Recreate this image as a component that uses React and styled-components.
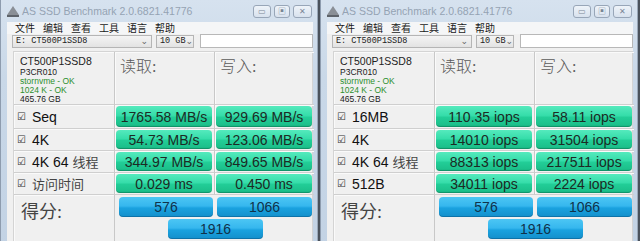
import React from 'react';
import styled, { createGlobalStyle } from 'styled-components';

const Global = createGlobalStyle`
  html, body { margin: 0; padding: 0; background: #4a525c; overflow: hidden; }
  body { width: 640px; height: 241px; font-family: "Liberation Sans", "Noto Sans CJK SC", sans-serif; }
`;

const Screen = styled.div`
  display: flex;
  width: 640px;
  height: 241px;
  overflow: hidden;
`;

const Window = styled.div`
  width: 318px;
  margin-right: 2px;
  height: 260px;
  background: linear-gradient(180deg, #d6e2ef 0%, #c9d8e8 30%, #c2d2e4 100%);
  border-left: 1px solid #8e9cae;
  border-right: 1px solid #9aa8b9;
  box-sizing: border-box;
  padding: 0 4px 0 6px;
  display: flex;
  flex-direction: column;
`;

const TitleBar = styled.div`
  height: 22px;
  display: flex;
  align-items: center;
`;

const AppIcon = styled.svg`
  width: 12px;
  height: 11px;
  margin-right: 3px;
  margin-top: 1px;
`;

const Title = styled.div`
  font-size: 10.5px;
  color: #95a3b3;
  flex: 1;
  white-space: nowrap;
`;

const Caption = styled.div`
  display: flex;
  gap: 3px;
  margin-right: 1px;
  margin-top: 1px;
`;

const CapBtn = styled.div`
  width: ${p => p.w}px;
  height: 13px;
  border: 1px solid #98a6b8;
  border-radius: 3px;
  background: linear-gradient(180deg, #eef3f9 0%, #d8e2ee 100%);
  display: flex;
  align-items: center;
  justify-content: center;
  box-sizing: border-box;
  color: #7a8696;
  font-size: 8px;
  line-height: 8px;
`;

const Client = styled.div`
  flex: 1;
  background: #f0f0f0;
  display: flex;
  flex-direction: column;
`;

const MenuBar = styled.div`
  height: 12px;
  display: flex;
  background: #f5f6f7;
  padding-left: 8px;
  gap: 8px;
  font-size: 10px;
  line-height: 11px;
  color: #1a1a1a;
  font-family: "Noto Sans CJK SC", sans-serif;
`;

const ComboRow = styled.div`
  display: flex;
  align-items: center;
  height: 14px;
  padding-left: 5px;
  gap: 4px;
`;

const Combo = styled.div`
  width: ${p => p.w}px;
  height: 13px;
  border: 1px solid #b5b5b5;
  background: linear-gradient(180deg, #f4f4f4, #e3e3e3);
  box-sizing: border-box;
  display: flex;
  align-items: center;
  font-family: "Liberation Mono", monospace;
  font-size: 8.5px;
  white-space: nowrap;
  color: #222;
  padding-left: 3px;
`;

const Arrow = styled.span`
  margin-left: auto;
  margin-right: 3px;
  font-family: "DejaVu Sans", sans-serif;
  font-size: 9px;
  line-height: 9px;
  color: #666;
`;

const TextBox = styled.div`
  flex: 1;
  height: 14px;
  border: 1px solid #b8b8b8;
  background: #fff;
  box-sizing: border-box;
  margin-left: 2px;
`;

const Panel = styled.div`
  margin: 3px 0 0 6px;
  display: grid;
  grid-template-columns: 101px 100px 99px;
  grid-template-rows: 53px 24px 22px 22px 22px 46px;
  border: 1px solid #d4d4d4;
  background: #f0f0f0;
`;

const Cell = styled.div`
  border-right: ${p => (p.last ? 'none' : '1px solid #c8c8c8')};
  border-bottom: 1px solid #cfcfcf;
  box-shadow: inset 1px 1px 0 #fafafa;
  box-sizing: border-box;
  display: flex;
  align-items: center;
  padding: 0 2px;
`;

const InfoCell = styled(Cell)`
  flex-direction: column;
  align-items: flex-start;
  justify-content: flex-start;
  padding: 3px 0 0 6px;
  font-size: 9px;
  line-height: 9px;
  color: #1a1a1a;
`;

const Model = styled.div`
  font-size: 10.5px;
  line-height: 12px;
  margin-bottom: 1px;
  color: #222;
`;

const InfoLine = styled.div`
  color: ${p => (p.ok ? '#2d8f2d' : '#1a1a1a')};
  font-size: 8.5px;
`;

const HeadCell = styled(Cell)`
  align-items: flex-start;
  padding: 1px 0 0 5px;
  font-family: "Liberation Serif", "Noto Sans CJK SC", serif;
  font-size: 16px;
  color: #5a5a5a;
  font-weight: 300;
`;

const LabelCell = styled(Cell)`
  font-size: 14px;
  color: #111;
  padding-left: 3px;
  gap: 4px;
`;

const Check = styled.span`
  font-family: "DejaVu Sans", sans-serif;
  font-size: 10px;
  color: #333;
  width: 11px;
`;

const Cjk = styled.span`
  font-family: "Noto Sans CJK SC", sans-serif;
  font-size: 13px;
  color: #444;
`;

const ResultCell = styled(Cell)`
  padding: 1px 2px 1px 1px;
  align-items: stretch;
`;

const Result = styled.div`
  flex: 1;
  border-radius: 4px;
  background: linear-gradient(180deg, #55eabd 0%, #36ddaa 45%, #22cd97 55%, #1cc08b 90%, #14a676 100%);
  box-shadow: inset 0 -1px 0 rgba(0, 80, 50, 0.25);
  display: flex;
  align-items: center;
  justify-content: center;
  font-size: 14px;
  color: #1c2a24;
`;

const ScoreLabel = styled.div`
  grid-column: 1;
  grid-row: 6;
  border-right: 1px solid #c8c8c8;
  padding: 2px 0 0 7px;
  font-family: "Liberation Serif", "Noto Sans CJK SC", serif;
  font-size: 18px;
  color: #444;
  box-shadow: inset 1px 1px 0 #fafafa;
`;

const ScoreArea = styled.div`
  grid-column: 2 / 4;
  grid-row: 6;
  display: grid;
  grid-template-columns: 94px 95px;
  column-gap: 4px;
  row-gap: 2px;
  padding: 2px 0 0 4px;
  grid-auto-rows: 20px;
`;

const Score = styled.div`
  grid-column: ${p => p.span || 'auto'};
  justify-self: ${p => (p.center ? 'center' : 'stretch')};
  width: ${p => (p.center ? '95px' : 'auto')};
  border-radius: 4px;
  background: linear-gradient(180deg, #4cc6f4 0%, #36b7ee 45%, #1aa2df 55%, #138fcb 100%);
  box-shadow: inset 0 -1px 0 rgba(0, 50, 90, 0.3);
  display: flex;
  align-items: center;
  justify-content: center;
  font-size: 14px;
  color: #10324a;
`;

const AppLogo = () => (
  <AppIcon viewBox="0 0 12 11">
    <path d="M6 0 L12 9 L0 9 Z" fill="#8a8f96" />
    <rect x="0" y="9" width="12" height="2" fill="#5e636a" />
  </AppIcon>
);

const rowsMB = [
  { label: 'Seq', r: '1765.58 MB/s', w: '929.69 MB/s' },
  { label: '4K', r: '54.73 MB/s', w: '123.06 MB/s' },
  { label: '4K 64', cjk: '线程', r: '344.97 MB/s', w: '849.65 MB/s' },
  { cjk: '访问时间', r: '0.029 ms', w: '0.450 ms' },
];

const rowsIops = [
  { label: '16MB', r: '110.35 iops', w: '58.11 iops' },
  { label: '4K', r: '14010 iops', w: '31504 iops' },
  { label: '4K 64', cjk: '线程', r: '88313 iops', w: '217511 iops' },
  { label: '512B', r: '34011 iops', w: '2224 iops' },
];

const Bench = ({ rows, drive }) => (
  <Window>
    <TitleBar>
      <AppLogo />
      <Title>AS SSD Benchmark 2.0.6821.41776</Title>
      <Caption>
        <CapBtn w={18}>▭</CapBtn>
        <CapBtn w={16}>▣</CapBtn>
        <CapBtn w={19}>✕</CapBtn>
      </Caption>
    </TitleBar>
    <Client>
      <MenuBar>
        <span>文件</span>
        <span>编辑</span>
        <span>查看</span>
        <span>工具</span>
        <span>语言</span>
        <span>帮助</span>
      </MenuBar>
      <ComboRow>
        <Combo w={140}>{drive}: CT500P1SSD8<Arrow>⌄</Arrow></Combo>
        <Combo w={38}>10 GB<Arrow>⌄</Arrow></Combo>
        <TextBox />
      </ComboRow>
      <Panel>
        <InfoCell>
          <Model>CT500P1SSD8</Model>
          <InfoLine>P3CR010</InfoLine>
          <InfoLine ok>stornvme - OK</InfoLine>
          <InfoLine ok>1024 K - OK</InfoLine>
          <InfoLine>465.76 GB</InfoLine>
        </InfoCell>
        <HeadCell>读取:</HeadCell>
        <HeadCell last>写入:</HeadCell>
        {rows.map((row, i) => (
          <React.Fragment key={i}>
            <LabelCell>
              <Check>☑</Check>
              {row.label && <span>{row.label}</span>}
              {row.cjk && <Cjk>{row.cjk}</Cjk>}
            </LabelCell>
            <ResultCell>
              <Result>{row.r}</Result>
            </ResultCell>
            <ResultCell last>
              <Result>{row.w}</Result>
            </ResultCell>
          </React.Fragment>
        ))}
        <ScoreLabel>得分:</ScoreLabel>
        <ScoreArea>
          <Score>576</Score>
          <Score>1066</Score>
          <Score span="1 / 3" center>1916</Score>
        </ScoreArea>
      </Panel>
    </Client>
  </Window>
);

export default function App() {
  return (
    <Screen>
      <Global />
      <Bench rows={rowsMB} drive="E" />
      <Bench rows={rowsIops} drive="E" />
    </Screen>
  );
}
